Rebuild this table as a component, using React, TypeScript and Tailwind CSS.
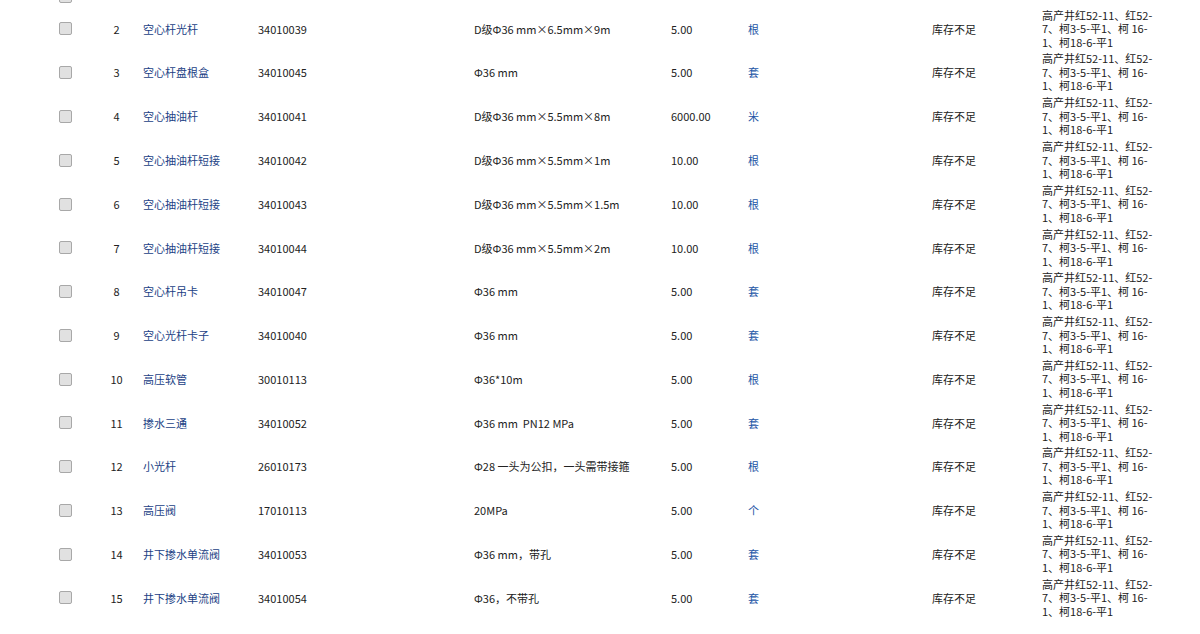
// Material requisition rows -- plain list, no header visible in this view.
// Row 1 sits mostly above the fold: only the foot of its checkbox peeks in.

const LOCATION = "高产井红52-11、红52-7、柯3-5-平1、柯 16-1、柯18-6-平1";

type Row = {
  no: number;
  name: string;
  code: string;
  spec: string;
  qty: string;
  unit: string;
};

const ROWS: Row[] = [
  { no: 2, name: "空心杆光杆", code: "34010039", spec: "D级Φ36 mm×6.5mm×9m", qty: "5.00", unit: "根" },
  { no: 3, name: "空心杆盘根盒", code: "34010045", spec: "Φ36 mm", qty: "5.00", unit: "套" },
  { no: 4, name: "空心抽油杆", code: "34010041", spec: "D级Φ36 mm×5.5mm×8m", qty: "6000.00", unit: "米" },
  { no: 5, name: "空心抽油杆短接", code: "34010042", spec: "D级Φ36 mm×5.5mm×1m", qty: "10.00", unit: "根" },
  { no: 6, name: "空心抽油杆短接", code: "34010043", spec: "D级Φ36 mm×5.5mm×1.5m", qty: "10.00", unit: "根" },
  { no: 7, name: "空心抽油杆短接", code: "34010044", spec: "D级Φ36 mm×5.5mm×2m", qty: "10.00", unit: "根" },
  { no: 8, name: "空心杆吊卡", code: "34010047", spec: "Φ36 mm", qty: "5.00", unit: "套" },
  { no: 9, name: "空心光杆卡子", code: "34010040", spec: "Φ36 mm", qty: "5.00", unit: "套" },
  { no: 10, name: "高压软管", code: "30010113", spec: "Φ36*10m", qty: "5.00", unit: "根" },
  { no: 11, name: "掺水三通", code: "34010052", spec: "Φ36 mm  PN12 MPa", qty: "5.00", unit: "套" },
  { no: 12, name: "小光杆", code: "26010173", spec: "Φ28 一头为公扣，一头需带接箍", qty: "5.00", unit: "根" },
  { no: 13, name: "高压阀", code: "17010113", spec: "20MPa", qty: "5.00", unit: "个" },
  { no: 14, name: "井下掺水单流阀", code: "34010053", spec: "Φ36 mm，带孔", qty: "5.00", unit: "套" },
  { no: 15, name: "井下掺水单流阀", code: "34010054", spec: "Φ36，不带孔", qty: "5.00", unit: "套" },
];

function Checkbox() {
  return (
    <span className="block h-[13px] w-[13px] rounded-[2px] border border-[#a8a8a8] bg-[#e1e1e1]" />
  );
}

export default function App() {
  return (
    <div className="h-[634px] overflow-hidden bg-white font-['Noto_Sans_CJK_SC','Noto_Sans',sans-serif] text-[11px] text-[#222]">
      <div className="-mt-[36.7px]">
        <div className="flex h-[43.77px] items-end pb-[4px]">
          <div className="flex w-[90px] pl-[59px]">
            <Checkbox />
          </div>
        </div>
        {ROWS.map((r) => (
          <div key={r.no} className="flex h-[43.77px] items-center">
            <div className="flex w-[90px] pl-[59px]">
              <Checkbox />
            </div>
            <div className="w-[53px] text-center">{r.no}</div>
            <div className="w-[115px] text-[#223f85]">{r.name}</div>
            <div className="w-[216px]">{r.code}</div>
            <div className="w-[197px] whitespace-pre">{r.spec}</div>
            <div className="w-[77px]">{r.qty}</div>
            <div className="w-[184px] text-[#2456a6]">{r.unit}</div>
            <div className="w-[110px]">库存不足</div>
            <div className="w-[116px] leading-[13.5px]">{LOCATION}</div>
          </div>
        ))}
      </div>
    </div>
  );
}
